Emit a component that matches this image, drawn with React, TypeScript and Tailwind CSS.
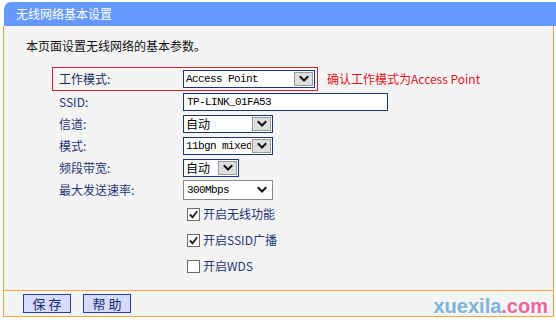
import React from 'react';

const cjk = { fontFamily: '"Noto Sans CJK SC", "Liberation Sans", sans-serif' };
const mono = { fontFamily: '"Liberation Mono", "Noto Sans CJK SC", monospace' };

function Chevron({ className = '' }: { className?: string }) {
  return (
    <svg viewBox="0 0 12 12" className={className} width="12" height="12">
      <path d="M2.5 4 L6 7.5 L9.5 4" fill="none" stroke="#111" strokeWidth="2" strokeLinecap="square" />
    </svg>
  );
}

function Select({ value, width, monoText = false }: { value: string; width: string; monoText?: boolean }) {
  return (
    <div className={`${width} h-[18px] flex items-stretch border border-[#1f3577] bg-white`}>
      <span
        className={`flex-1 flex items-center pl-[2px] leading-none overflow-hidden whitespace-nowrap text-black ${
          monoText ? 'text-[11px] tracking-[-0.6px]' : 'text-[12px]'
        }`}
        style={monoText ? mono : cjk}
      >
        {value}
      </span>
      <span className="w-[19px] flex items-center justify-center bg-[#dedede] border border-[#9a9a9a] m-[1px]">
        <Chevron />
      </span>
    </div>
  );
}

function Row({ label, children }: { label: string; children: React.ReactNode }) {
  return (
    <div className="h-[22px] flex items-center pl-[7px]">
      <span className="w-[124px] text-[12px] text-[#1e3577]" style={cjk}>{label}</span>
      {children}
    </div>
  );
}

function Check({ checked, label }: { checked: boolean; label: string }) {
  return (
    <div className="h-[26px] flex items-center pl-[135px]">
      <span className="w-[13px] h-[13px] border border-[#6b6b6b] bg-white flex items-center justify-center mr-[3px]">
        {checked && (
          <svg viewBox="0 0 12 12" width="11" height="11">
            <path d="M2 6 L5 9 L10 2.5" fill="none" stroke="#222" strokeWidth="2" />
          </svg>
        )}
      </span>
      <span className="text-[12px] text-[#1e3577]" style={cjk}>{label}</span>
    </div>
  );
}

export default function App() {
  return (
    <div className="relative w-[556px] h-[320px] bg-white overflow-hidden">
      <div className="ml-[4px] mt-[2px] h-[24px] bg-[#6699ff] rounded-tl-[7px] flex items-center pl-[12px]">
        <span className="text-[12px] text-white" style={cjk}>无线网络基本设置</span>
      </div>

      <div className="ml-[3px] w-[551px] bg-[#f4f4f4] border-x border-[#f5a24c]">
        <div className="h-[264px] pt-[13px]">
          <p className="pl-[22px] text-[12px] leading-[14px] text-[#111]" style={cjk}>本页面设置无线网络的基本参数。</p>

          <div className="ml-[48px] mt-[14px]">
            <div className="w-[266px] h-[24px] border border-[#d2232a] flex items-center pl-[6px]">
              <span className="w-[124px] text-[12px] text-[#1a2b5f]" style={cjk}>工作模式:</span>
              <Select value="Access Point" width="w-[132px]" monoText />
              <span className="absolute left-[327px] top-[70px] text-[12px] text-[#e0141e]" style={cjk}>
                确认工作模式为Access Point
              </span>
            </div>

            <Row label="SSID:">
              <div
                className="w-[205px] h-[18px] border border-[#1f3577] bg-white flex items-center pl-[3px] text-[11px] tracking-[-0.6px] text-black"
                style={mono}
              >
                TP-LINK_01FA53
              </div>
            </Row>
            <Row label="信道:">
              <Select value="自动" width="w-[90px]" />
            </Row>
            <Row label="模式:">
              <Select value="11bgn mixed" width="w-[90px]" monoText />
            </Row>
            <Row label="频段带宽:">
              <Select value="自动" width="w-[56px]" />
            </Row>
            <Row label="最大发送速率:">
              <div className="w-[90px] h-[20px] border border-[#8a8a8a] bg-white flex items-center justify-between pl-[3px] pr-[4px]">
                <span className="text-[11px] tracking-[-0.6px] text-black" style={mono}>300Mbps</span>
                <Chevron />
              </div>
            </Row>

            <Check checked label="开启无线功能" />
            <Check checked label="开启SSID广播" />
            <Check checked={false} label="开启WDS" />
          </div>
        </div>

        <div className="h-[27px] border-y border-[#f5a24c] flex items-center pl-[19px] gap-[12px]">
          {['保 存', '帮 助'].map((t) => (
            <button
              key={t}
              className="w-[48px] h-[19px] bg-[#d6dbff] border border-[#2b3e9c] text-[13px] leading-none text-[#1a2b6f]"
              style={cjk}
            >
              {t}
            </button>
          ))}
        </div>
      </div>

      <div
        className="absolute right-[8px] top-[296px] text-[20px] font-bold leading-none"
        style={{ fontFamily: '"Liberation Sans", Arial, sans-serif' }}
      >
        <span className="text-[#7fb3d9]">xuexila</span>
        <span className="text-[#e8679f]">.com</span>
      </div>
    </div>
  );
}
